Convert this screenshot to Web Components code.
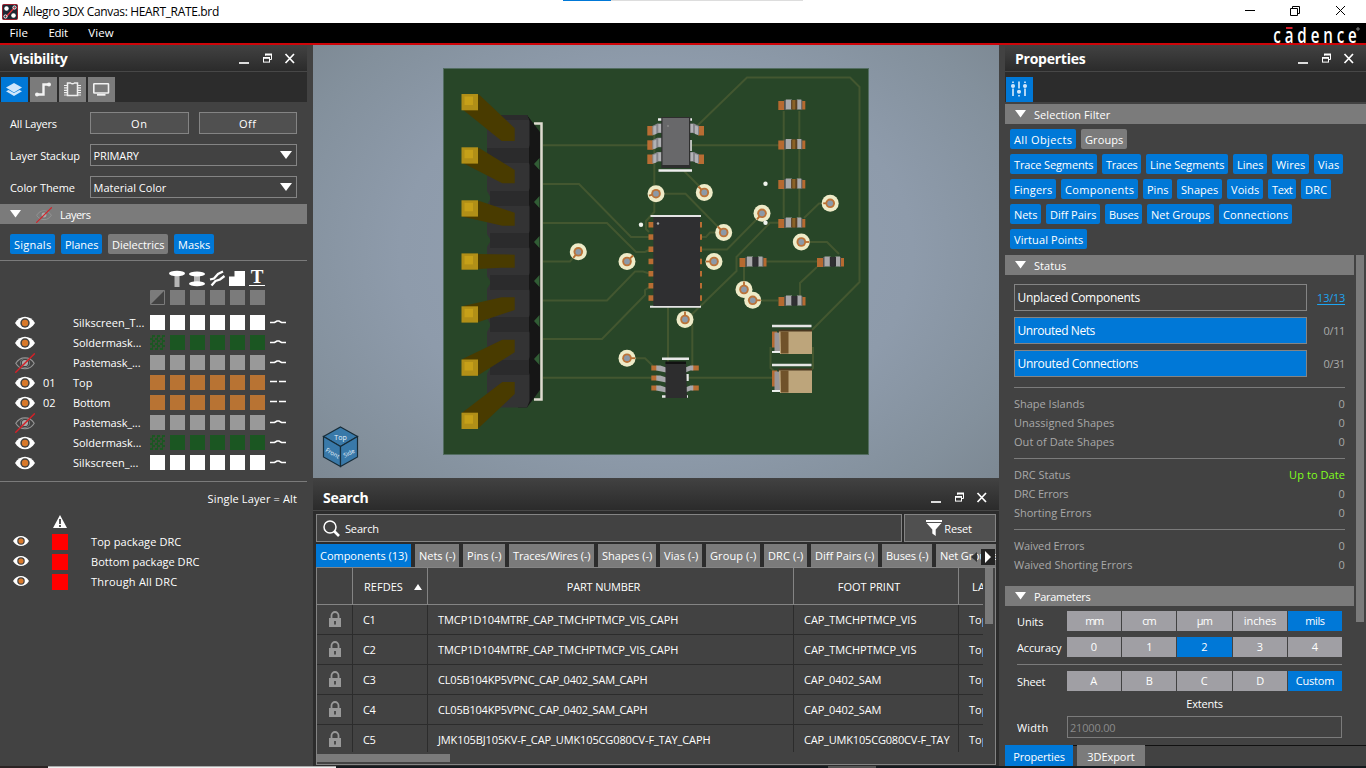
<!DOCTYPE html>
<html lang="en">
<head>
<meta charset="utf-8">
<title>Allegro 3DX Canvas: HEART_RATE.brd</title>
<style>
html,body{margin:0;padding:0;width:1366px;height:768px;overflow:hidden;background:#424242}
body{font-family:"Open Sans","Noto Sans",sans-serif;font-size:11px;line-height:16px;color:#fff}
</style>
</head>
<body>
<allegro-app></allegro-app>
<script>
const base = `*{box-sizing:border-box}:host{display:block;box-sizing:border-box}svg{display:block}`;
const define = (name, css, render) => customElements.define(name, class extends HTMLElement {
  connectedCallback() {
    if (this.shadowRoot) return;
    const root = this.attachShadow({ mode: 'open' });
    root.innerHTML = `<style>${base}${css}</style>${render(this)}`;
  }
});
const at = (el, name, dflt = '') => el.getAttribute(name) ?? dflt;

/* Text run whose tracking is tuned to a given width */
const runs = [];
define('ui-text', `:host{display:inline-block;white-space:nowrap;flex:none;justify-self:start}`, el => { runs.push(el); return '<slot></slot>'; });
function fitRuns() {
  for (const el of runs) {
    const w = parseFloat(at(el, 'w', '0'));
    if (!w) continue;
    const nat = el.getBoundingClientRect().width;
    const slot = el.querySelector('slot');
    const text = slot ? slot.assignedNodes({ flatten: true }).map(n => n.textContent).join('') : el.textContent;
    el.style.letterSpacing = ((w + .4 - nat) / text.length).toFixed(3) + 'px';
  }
}

/* ---------- small pieces ---------- */
define('eye-icon', `:host{flex:none}`, el => {
  const w = at(el, 'w', 20), off = el.hasAttribute('off');
  return off
    ? `<svg width="${w}" height="${w}" viewBox="0 0 20 20"><path d="M.8 10.3C5 3 15 3 19.2 10.3 15 17.6 5 17.6.8 10.3Z" fill="none" stroke="#959595" stroke-width="1.1"/><circle cx="10" cy="10" r="4.6" fill="none" stroke="#777"/><circle cx="10" cy="10" r="3.1" fill="#a9a9a9"/><path d="M.3 19.7 19.8.4" stroke="#d61f26" stroke-width="1.4"/></svg>`
    : `<svg width="${w}" height="${w}" viewBox="0 0 20 20"><path d="M0 10C5 1.6 15 1.6 20 10 15 18.4 5 18.4 0 10Z" fill="#fff"/><circle cx="10" cy="10" r="4.7" fill="#424242"/><circle cx="10" cy="10" r="3.2" fill="#d8792b"/></svg>`;
});
define('filter-chip', `:host{height:20px;border-radius:2px;background:#0078d7;padding-left:4px;line-height:21px;flex:none}:host([off]){background:#7b7b7b}`,
  el => { el.style.width = at(el,'w') + 'px'; return `<ui-text w="${at(el,'w') - 8}"><slot></slot></ui-text>`; });
define('rule-line', `:host{height:1px;background:#7b7b7b;flex:none}`, () => '');
define('section-bar', `:host{height:20px;flex:none;background:#7b7b7b;display:flex;align-items:center;padding:1px 0 0 10px}svg{margin-top:-1px}`,
  () => `<svg width="11" height="8"><path d="M0 0H11L5.5 7.5Z" fill="#fff"/></svg><slot></slot>`);
define('window-buttons', `:host{display:flex;align-items:flex-start;gap:0;width:58px;height:14px;flex:none}`,
  () => `<svg width="58" height="14" viewBox="0 0 58 14" fill="none" stroke="#fff"><path d="M1 11H11" stroke-width="2" stroke="#ddd"/><path d="M27.5 3.5V2.5H33.5V7.5H31.5" /><path d="M27 2.5H34" stroke-width="2"/><rect x="25.5" y="5.5" width="6" height="4.6"/><path d="M25 6H32" stroke-width="1.6"/><path d="M47.5 2 56 11M56 2 47.5 11" stroke-width="1.7"/></svg>`);
define('dock-header', `:host{height:27px;flex:none;background:linear-gradient(#424242,#2b2b2b);border-bottom:1px solid #474747;display:flex;justify-content:space-between;padding:0 11.500px 0 10px;font-size:14px;font-weight:700;line-height:28px}window-buttons{margin-top:7px}:host([tall]){height:33px;line-height:40px;}:host([tall]) window-buttons{margin-top:13px}`,
  el => `<ui-text w="${at(el,'w')}">${at(el,'label')}</ui-text><window-buttons></window-buttons>`);
define('tool-strip', `:host{height:30px;flex:none;background:#2c2c2c;display:flex;gap:2px;padding:5px 1px 0}`, () => `<slot></slot>`);
define('tool-tab', `:host{width:27px;height:25px;background:#7b7b7b;flex:none}:host([on]){background:#0078d7}`, el => {
  const g = {
    layers: `<path d="M5 10.6 13 6 21 10.6 13 15.4Z" fill="#cfe6fb"/><path d="M5 14.3 7.6 12.9 13 16 18.400 12.9 21 14.3 13 19Z" fill="#cfe6fb"/>`,
    route: `<path d="M7 17.500H13.500V7.500H19" fill="none" stroke="#f2f2f2" stroke-width="2.400"/><circle cx="7" cy="17.500" r="2" fill="#f2f2f2"/><circle cx="19" cy="7.500" r="2" fill="#f2f2f2"/>`,
    chip: `<path d="M8.500 6H11.500Q13.500 7.500 15.500 6H18.500V18.500H8.500Z" fill="none" stroke="#eee" stroke-width="1.500"/><path d="M5 8.500H8M5 10.900H8M5 13.300H8M5 15.700H8M5 18H8M19 8.500H22M19 10.900H22M19 13.300H22M19 15.700H22M19 18H22" stroke="#eee" stroke-width="1.200"/>`,
    screen: `<rect x="5.800" y="6.800" width="14.700" height="9.200" rx=".5" fill="none" stroke="#f2f2f2" stroke-width="1.600"/><path d="M9 17.800H17.500" stroke="#f2f2f2" stroke-width="1.800"/>`,
    sliders: `<g stroke="#cfe6fb" stroke-width="1.700" fill="#cfe6fb"><path d="M7 4.500V6M7 11.500V19M13 4.500V11.500M13 18V19.500M19 4.500V6M19 11.500V19"/><circle cx="7" cy="9" r="1.200"/><circle cx="13" cy="14.700" r="1.200"/><circle cx="19" cy="9" r="1.200"/></g>`
  }[at(el,'icon')];
  return `<svg width="27" height="25" viewBox="0 0 27 25">${g}</svg>`;
});

/* ---------- top bars ---------- */
define('title-bar', `:host{height:23px;background:#fff;color:#000;font-size:12px;display:flex;align-items:center;padding-left:2px;position:relative}
.logo{margin-right:5px}.sp{flex:1}.mark{position:absolute;left:563px;top:0;width:240px;height:1px;display:flex}.mark i{width:48px;background:#0078d7}.mark b{flex:1;background:#ddd}`,
() => `<svg class="logo" width="16" height="16" viewBox="0 0 16 16"><rect x=".5" y=".5" width="15" height="15" rx="1" fill="#1d2733" stroke="#9b1d2b"/><path d="M4 13 13 3" stroke="#e32b36" stroke-width="1.300"/><circle cx="4.500" cy="4.500" r="2.200" fill="#fff"/><circle cx="11.500" cy="11.500" r="2.300" fill="#fff"/><circle cx="12.500" cy="3.500" r="1.600" fill="none" stroke="#fff"/><circle cx="3.500" cy="12.500" r="1.600" fill="none" stroke="#fff"/></svg>
<ui-text w="195.500">Allegro 3DX Canvas: HEART_RATE.brd</ui-text><span class="sp"></span>
<svg width="121" height="20" viewBox="0 0 121 20" fill="none" stroke="#000"><path d="M0 8.500H10M45.500 6.500H52.500V13.500H45.500ZM47.500 6V4.500H54.500V11.500H53M91 4 100 13M100 4 91 13"/></svg><div class="mark"><i></i><b></b></div>`);
define('menu-bar', `:host{height:22px;background:#000;border-bottom:2px solid #cf0509;display:flex;align-items:center;padding-left:9.500px;font-size:11.500px}
.m1{margin-right:20.500px}.m2{margin-right:20.500px}.sp{flex:1}svg{margin-right:4px;overflow:visible}`,
() => `<ui-text w="18" class="m1">File</ui-text><ui-text w="19" class="m2">Edit</ui-text><ui-text w="25">View</ui-text><span class="sp"></span>
<svg width="90" height="20" viewBox="1272 23 90 20"><text transform="translate(1273.300 42.500) scale(.72 1)" font-family="Open Sans" font-size="21" font-weight="600" fill="#fff" textLength="116" lengthAdjust="spacing">cadence</text><path d="M1286 28H1292.500" stroke="#d81e2c" stroke-width="2"/><circle cx="1358" cy="29" r="1.200" fill="none" stroke="#bbb" stroke-width=".7"/></svg>`);

/* ---------- visibility ---------- */
define('text-row', `:host{display:flex;height:22px;margin:0 10px 10px;line-height:24px}.l{width:80px;flex:none}.r{flex:1;display:flex;gap:10px}`,
  el => `<div class="l"><ui-text w="${at(el,'w')}">${at(el,'label')}</ui-text></div><div class="r"><slot></slot></div>`);
define('push-button', `:host{flex:1;border:1px solid #848484;background:#505050;text-align:center;line-height:22px}`, () => '<slot></slot>');
define('drop-down', `:host{flex:1;border:1px solid #848484;padding:0 4px 0 2.500px;display:flex;justify-content:space-between;line-height:22px}svg{margin-top:6px}`,
  () => `<slot></slot><svg width="12" height="9"><path d="M0 0H12L6 8Z" fill="#fff"/></svg>`);
define('layer-row', `:host{display:grid;grid-template-columns:28px 30px 77px 120px 20px;height:20px;padding-left:15px;align-items:center;line-height:16px}
.sw{display:flex;gap:5px}.sw i{width:15px;height:15px;background:var(--c)}.sw i.hatch{background:repeating-conic-gradient(#1b5622 0 25%,#3c4a38 0 50%) 0 0/5px 5px}svg{margin-top:-1px}eye-icon{margin-top:1px}ui-text{margin-top:1px}.n{height:17px}`,
  el => { const c = at(el,'c'), h = el.hasAttribute('hatch'), d = el.hasAttribute('dash'), num = at(el,'num');
    return `<eye-icon w="20" ${el.hasAttribute('off') ? 'off' : ''}></eye-icon><span class="n">${num ? `<ui-text w="12">${num}</ui-text>` : ''}</span><ui-text w="${at(el,'w')}">${at(el,'name')}</ui-text>
    <div class="sw" style="--c:${c}"><i class="${h ? 'hatch' : ''}"></i><i></i><i></i><i></i><i></i><i></i></div>
    <svg width="17" height="6" viewBox="0 0 17 6" fill="none" stroke="#fff" stroke-width="1.600">${d ? '<path d="M0 2.500H7M9 2.500H16"/>' : '<path d="M0 3.500H4.500L7 2H9L11.500 3.500H16"/>'}</svg>`; });
define('drc-row', `:host{display:flex;height:20px;padding-left:13px;align-items:center}eye-icon{margin:-3px 22.500px 0 0}i{width:16px;height:16px;background:#f00;margin-right:23.500px}`,
  el => `<eye-icon w="16"></eye-icon><i></i><ui-text w="${at(el,'w')}"><slot></slot></ui-text>`);
define('visibility-panel', `:host{width:307px;display:flex;flex-direction:column}.form{padding-top:10px;height:102px}.chips{display:flex;gap:6px;padding:10px 10px 6px}
.heads{display:flex;padding:9px 0 0 150px;height:45px}.heads svg{overflow:visible}.rows{height:175px;padding-top:6px;}.alt{text-align:right;padding:9px 10px 0 0;height:33px}.warn{padding-left:53px;height:17px;}.sec-eye{margin:0 8px 0 15px}`,
() => `<dock-header label="Visibility" w="57"></dock-header>
<tool-strip><tool-tab on icon="layers"></tool-tab><tool-tab icon="route"></tool-tab><tool-tab icon="chip"></tool-tab><tool-tab icon="screen"></tool-tab></tool-strip>
<div class="form">
<text-row label="All Layers" w="46.500"><push-button><ui-text w="16">On</ui-text></push-button><push-button><ui-text w="17">Off</ui-text></push-button></text-row>
<text-row label="Layer Stackup" w="69.500"><drop-down><ui-text w="45">PRIMARY</ui-text></drop-down></text-row>
<text-row label="Color Theme" w="64.500"><drop-down><ui-text w="72.500">Material Color</ui-text></drop-down></text-row></div>
<section-bar><eye-icon w="16" off class="sec-eye"></eye-icon><ui-text w="30">Layers</ui-text></section-bar>
<div class="chips"><filter-chip w="45">Signals</filter-chip><filter-chip w="41">Planes</filter-chip><filter-chip w="60" off>Dielectrics</filter-chip><filter-chip w="40">Masks</filter-chip></div>
<rule-line></rule-line>
<div class="heads"><svg width="120" height="36" viewBox="0 0 120 36"><g fill="#fff"><path d="M24.500 5H29.500V17H24.500Z" fill="#b5b5b5"/><ellipse cx="27" cy="3.500" rx="8" ry="2.700"/><path d="M44 6H50V14H44Z" fill="#b5b5b5"/><ellipse cx="47" cy="4" rx="8" ry="2.500"/><ellipse cx="47" cy="13.700" rx="8" ry="2.500"/><path d="M79 16V6.500H84.500V1H95V16Z"/></g><path d="M60 9.500 64 8.500 68 4 73 1.500M61.500 15.500 65.500 11 70 9.500 74.500 6" fill="none" stroke="#fff" stroke-width="2.300"/><text x="107" y="13" text-anchor="middle" font-family="Liberation Serif" font-size="19" font-weight="700" fill="#fff">T</text><path d="M99 15.500H115" stroke="#fff"/><g fill="#7b7b7b"><path d="M20 20h15v15h-15zM40 20h15v15h-15zM60 20h15v15h-15zM80 20h15v15h-15zM100 20h15v15h-15z"/><path d="M.5 34.500V20.500H14.500Z"/></g><path d="M.5 20.500h14v14h-14z" fill="none" stroke="#7b7b7b"/></svg></div>
<div class="rows">
<layer-row name="Silkscreen_T..." w="71" c="#fff"></layer-row><layer-row name="Soldermask..." w="68" c="#1b5622" hatch></layer-row><layer-row off name="Pastemask_..." w="67" c="#999"></layer-row><layer-row num="01" name="Top" w="19" c="#b87333" dash></layer-row><layer-row num="02" name="Bottom" w="37" c="#b87333" dash></layer-row><layer-row off name="Pastemask_..." w="67" c="#999"></layer-row><layer-row name="Soldermask..." w="68" c="#1b5622" hatch></layer-row><layer-row name="Silkscreen_..." w="65" c="#fff"></layer-row></div>
<rule-line></rule-line>
<div class="alt"><ui-text w="89">Single Layer = Alt</ui-text></div>
<div class="warn"><svg width="14" height="13"><path d="M7 0 14 13H0Z" fill="#fff"/><path d="M7 4V9M7 10V12" stroke="#424242" stroke-width="1.800"/></svg></div>
<drc-row w="90">Top package DRC</drc-row><drc-row w="108">Bottom package DRC</drc-row><drc-row w="86">Through All DRC</drc-row>`);

/* ---------- 3D canvas ---------- */
const tips = [94, 147.300, 200.300, 253.400, 306.300, 359.500, 412.700];
const shafts = ['478.700,94.300 514.700,128.300 514.700,141 501.700,141 463.300,110','478.700,147.700 514.700,170 514.700,183.300 502.300,183.300 463.300,163.300','478.700,200.700 514.700,212.700 514.700,225.700 502.300,225.700 463.300,216.700','478,254 514.700,254.700 514.700,267.700 501,267.700 478,269','463.300,306 501.700,297.300 514.700,297.300 514.700,310 478.700,322','462,359.300 502.300,339.700 514.700,339.700 514.700,352.300 478.700,375','462,412.700 502.300,382 514.700,382 514.700,394 478.700,428'];
const vias = [[656,193.700,-7,2],[704.300,192.500,-6,-6],[723.700,232.500,-6,-6],[762,213.300,-5,6],[830.200,203.300,-7,0],[801.300,242,8,0],[578.300,251.800,-5,6],[627,261.500,6,-6],[714,261.500,-8,0],[744,289.500,0,-8],[752.700,300.300,8,0],[685,319.500,0,-8],[627,358.200,8,0]];
const smd = (x, y, mid, top = '#5b4021') => `<g transform="translate(${x} ${y})"><path d="M0 1.500h6v9h-6zM23.500 1.500h3.500v8.500h-3.500z" fill="#b66a30"/><path d="M6 .5h2v10h-2zM22.500 .5h1.500v10h-1.500z" fill="#555"/><path d="M7.500 0h6v10h-6zM18.500 0h4.500v10h-4.500z" fill="#a9a9ab"/><path d="M12.800 .5h6.200v9.500h-6.200z" fill="${top}"/><path d="M14 .5h3v9.500h-3z" fill="${mid}"/></g>`;
const leads = (x, y, flip, s = 1) => `<g transform="translate(${x} ${y}) scale(${flip ? -s : s} ${s})"><path d="M0 0h6v9.500h-6z" fill="#b86d33"/><path d="M5 0 10 -2.500H16V7H11L5 9Z" fill="#85858a"/><path d="M6 .5 9 -.5V8L6 9ZM11 -2H14V6.500H11Z" fill="#b2b2b5"/></g>`;
const tant = y => `<g transform="translate(0 ${y})"><path d="M772 1.500H811.500" stroke="#e5e5e5" stroke-width="2.700"/><path d="M772 7H777V23H772Z" fill="#b56a31"/><path d="M774.500 8H780V27H774.500Z" fill="#9a9698"/><path d="M778.500 5H812V8H778.500Z" fill="#493720"/><path d="M779 7H812V29.500H780Z" fill="#bda57b"/><path d="M780.500 7H788.500V29H781Z" fill="#70522a"/><path d="M772 27.500H780" stroke="#fff" stroke-width="1.800"/></g>`;
define('board-view', `:host{height:433px;background:radial-gradient(ellipse 68% 78% at 50% 48%,#95a2b4 0,#8e9bab 55%,#83909c 84%,#747e87 120%)}`,
() => `<svg width="686" height="433" viewBox="313 45 686 433">
<rect x="443.500" y="68.500" width="425" height="386" fill="#284628" stroke="#526c60"/>
<g fill="none" stroke="#435730" stroke-width="2"><path d="M543 145.300H650M543 184H579L631 237H651M543 223H607L636 252H645L651 249M543 261.500H570L578 252M543 300.500H607L635 271.500H643L651 274M543 339H602L645 295V290L651 286M543 377.700H772M654.300 130V212L646 221V229L649 232M684 171 704 191M697 126 747 77.500H850L859.500 87V282L812 330M692 145.300H780M783.700 111V218M799.300 111V218M656 193.700H685.500L723 232M702 237H706L710 232.500H724M702 249.500H727L762 214M780 222.700H770L736.500 257V271L692.300 314V368M668 307V362M804 218 819 203.500H830M801 242H827L839 254M744 267V290M766 261.500H817M817 267 800 283V297M753 300.500H778M627 358.200H645L653 366M770.500 347V368L774 371M813 347V368L810 371"/></g>
<path d="M534 123.500H541.500V399.500H534" fill="none" stroke="#dedbd0" stroke-width="2.500"/>
<path d="M527 115 540 132V390L527 407.500H518V115Z" fill="#161616"/>
<path d="M500 115H527L529.500 121V145L527.500 156 529.500 165V188L527.500 198 529.500 207V231L527.500 240 529.500 249V273L527.500 282 529.500 291V315L527.500 324 529.500 333V357L527.500 366 529.500 375V401L527 407.500H500L487 398V374L490.500 368 487 361V332L491 325 487 318V289L491 282.500 487 276V247L491 240.500 487 234V205L491 198 487 191V121Z" fill="#333334"/>
<path d="M487 148h42v15h-42zM490 191h39v15h-39zM490 233h39v15h-39zM490 275h39v15h-39zM490 317h39v15h-39zM490 360h39v15h-39zM500 115h27l2 5h-42z" fill="#2b2b2c"/>
<g fill="#315d35"><path d="M539.500 158V170L534 164ZM539.500 196V208L534 202ZM539.500 236V248L534 242ZM539.500 275V287L534 281ZM539.500 315V327L534 321ZM539.500 353V365L534 359Z"/></g>
${shafts.map(p => `<polygon points="${p}" fill="#493b00"/>`).join('')}
${tips.map(y => `<rect x="461.500" y="${y}" width="16.500" height="16.300" fill="#b18f17"/><rect x="464.500" y="${y + 2.500}" width="8.500" height="8.500" fill="#c6a018"/>`).join('')}
${vias.map(([x, y, dx, dy]) => `<circle cx="${x}" cy="${y}" r="8.500" fill="#eeebc8"/><path d="M${x} ${y}l${dx} ${dy}" stroke="#b66c30" stroke-width="1.800"/><circle cx="${x}" cy="${y}" r="4.800" fill="#bb7339"/><circle cx="${x}" cy="${y}" r="2.900" fill="#8c99a8"/>`).join('')}
<g fill="#f1f4ee"><circle cx="641" cy="224.700" r="2.200"/><circle cx="765.500" cy="183.700" r="2.200"/><circle cx="765.500" cy="222.700" r="2.200"/></g>
${leads(647.300,126,0)}${leads(647.300,140.300,0)}${leads(647.300,154.500,0)}${leads(704,126,1)}${leads(704,154.500,1)}
<path d="M658 119.500H692M658.500 170.500H692M690.500 140V151" stroke="#eee" stroke-width="2.500"/>
<rect x="661.300" y="117" width="29" height="51" fill="#2e2e2e"/><rect x="662.500" y="118" width="26.500" height="47" fill="#68686a"/><circle cx="668" cy="126" r="1" fill="#888"/>
<g fill="#b86d33">${[222,234.300,246.500,258.700,271,283,295.300].map(y => `<rect x="648.500" y="${y}" width="6" height="5.500"/><rect x="697" y="${y}" width="5" height="5.500"/>`).join('')}</g>
<path d="M650.500 216H701M650 306.700H701" stroke="#e5e5e5" stroke-width="2"/><rect x="653.300" y="217" width="46.700" height="89" fill="#2f2f31"/><circle cx="658" cy="223.500" r="1.200" fill="#aaa"/>
<g transform="translate(651.300 0)">${[365.500,375.500,385.500].map(y => `<path d="M0 ${y}h6v5h-6z" fill="#b86d33"/><path d="M5 ${y}H9L15 ${y + 2}V${y + 7}L10 ${y + 6} 5 ${y + 5}Z" fill="#a7a7ab"/>`).join('')}${[365.500,385.500].map(y => `<path d="M41 ${y}h6.500v5h-6.500z" fill="#b86d33"/><path d="M42 ${y}H39L34 ${y + 2}V${y + 7}L39 ${y + 5} 42 ${y + 5}Z" fill="#a7a7ab"/>`).join('')}</g>
<path d="M662 358.700H689M662 396.500H688M687.500 374V381" stroke="#e8e8e8" stroke-width="2.500"/><path d="M665.500 362H686L687 398H665.500Z" fill="#2d2d2e"/><path d="M665.500 361.500H686V364H665.500Z" fill="#111"/>
${smd(778.300,99.500,'#8a6226')}${smd(778.300,139,'#8a6226')}${smd(778.300,178.500,'#8a6226')}${smd(778.300,217.500,'#8a6226')}${smd(739.500,256.500,'#303033','#2d2d30')}${smd(817,256.500,'#303033','#2d2d30')}${smd(778.500,295.500,'#303033','#2d2d30')}
${tant(324.500)}${tant(363.500)}
<g stroke="#172c38" stroke-width="1.200" fill="#3979a9"><path d="M340.500 427 357.500 436.500 340.500 446.500 323.500 436.500Z"/><path d="M323.500 436.500 340.500 446.500V466.500L323.500 457Z"/><path d="M357.500 436.500 340.500 446.500V466.500L357.500 457Z"/></g>
<g font-family="Open Sans" font-size="7" fill="#e7f3fb" text-anchor="middle"><text x="340.500" y="439.500">Top</text><text transform="translate(331.500 455) rotate(30)" font-size="6">Front</text><text transform="translate(350 455) rotate(-28)" font-size="6">Side</text></g>
</svg>`);

/* ---------- search ---------- */
define('result-tab', `:host{height:23px;background:#7b7b7b;padding-left:4px;line-height:24px;flex:none;width:var(--w)}:host([on]){background:#0078d7}`,
  el => `<ui-text w="${at(el,'w')}"><slot></slot></ui-text>`);
define('result-row', `:host{display:grid;grid-template-columns:36px 75px 366px 165px 25px;height:30px}
div{border-right:1px solid #2c2c2c;border-bottom:1px solid #2c2c2c;padding-left:10px;line-height:29px;overflow:hidden;white-space:nowrap}div:last-child{border-right:0}.k{padding:6px 0 0 12px}`,
  el => `<div class="k"><svg width="12" height="16"><path d="M2.500 7V4.500a3.500 3.500 0 0 1 7 0V7" fill="none" stroke="#999" stroke-width="1.800"/><path d="M0 7H12V16H0Z" fill="#999"/><path d="M6 10V13.500" stroke="#444" stroke-width="1.800"/></svg></div><div><ui-text w="12">${at(el,'ref')}</ui-text></div><div><ui-text w="${at(el,'pw')}">${at(el,'part')}</ui-text></div><div><ui-text w="${at(el,'fw')}">${at(el,'foot')}</ui-text></div><div><ui-text w="19">Top</ui-text></div>`);
define('search-panel', `:host{height:288px;background:#2c2c2c;display:flex;flex-direction:column}
.q{display:flex;gap:2px;padding:3px 3px 0;height:31px}.box{width:586px;border:1px solid #848484;background:#424242;display:flex;align-items:center;padding-left:6px;gap:5px}.box ui-text,.reset ui-text{margin-top:1px}.reset{flex:1;border:1px solid #848484;background:#505050;display:flex;align-items:center;justify-content:center;gap:2px;padding-right:2px}
.tabs{position:relative;display:flex;gap:4px;margin:2px 3px 0;height:23px;overflow:hidden}.nav{position:absolute;right:1px;top:5px;display:flex}
.tbl{margin:0 3px;height:198px;border:1px solid #848484;background:#424242;display:grid;grid-template-columns:666px 13px;overflow:hidden}.grid{height:184px;overflow:hidden}
.head{display:grid;grid-template-columns:36px 75px 366px 165px 25px;height:37px}.head div{border-right:1px solid #848484;border-bottom:1px solid #848484;line-height:38px;text-align:center;overflow:hidden;white-space:nowrap;padding-right:14px}.head div:last-child{border-right:0;text-align:left;padding:0 0 0 13px}.head .ref{display:flex;align-items:center;padding:1px 0 0 11px;gap:11px;}
.vs{width:8px;height:56px;background:#7b7b7b;margin-left:2px}.hs{width:133px;height:8px;background:#7b7b7b;margin-top:2px}`,
() => { const tab = (t, W, w, on) => `<result-tab ${on ? 'on' : ''} w="${w}" style="--w:${W}px">${t}</result-tab>`;
return `<dock-header tall label="Search" w="45"></dock-header>
<div class="q"><div class="box"><svg width="17" height="17"><circle cx="7" cy="7" r="6" fill="none" stroke="#fff" stroke-width="1.500"/><path d="M11 11 16 16" stroke="#fff" stroke-width="2.600"/></svg><ui-text w="33.500">Search</ui-text></div><div class="reset"><svg width="16" height="16"><path d="M0 0H16V2H0ZM.5 3H15.500L9.700 9.500V16L6.300 13.500V9.500Z" fill="#fff"/></svg><ui-text w="27">Reset</ui-text></div></div>
<div class="tabs">${tab('Components (13)',95,87,1)}${tab('Nets (-)',44,36)}${tab('Pins (-)',42,34)}${tab('Traces/Wires (-)',85,77)}${tab('Shapes (-)',58,50)}${tab('Vias (-)',42,34)}${tab('Group (-)',54,46)}${tab('DRC (-)',43,35)}${tab('Diff Pairs (-)',67,59)}${tab('Buses (-)',50,42)}${tab('Net Groups (-)',80,70)}<div class="nav"><svg width="26" height="16"><path d="M8 3V13L2 8Z" fill="#333"/><path d="M12 0H26V16H12Z" fill="#242424"/><path d="M16 2V14L22 8Z" fill="#fff"/></svg></div></div>
<div class="tbl"><div><div class="grid"><div class="head"><div></div><div class="ref"><ui-text w="38.500">REFDES</ui-text><svg width="8" height="6"><path d="M4 0 8 6H0Z" fill="#fff"/></svg></div><div><ui-text w="73">PART NUMBER</ui-text></div><div><ui-text w="62">FOOT PRINT</ui-text></div><div><ui-text w="33">LAYER</ui-text></div></div>
<result-row ref="C1" part="TMCP1D104MTRF_CAP_TMCHPTMCP_VIS_CAPH" pw="240" foot="CAP_TMCHPTMCP_VIS" fw="112"></result-row><result-row ref="C2" part="TMCP1D104MTRF_CAP_TMCHPTMCP_VIS_CAPH" pw="240" foot="CAP_TMCHPTMCP_VIS" fw="112"></result-row><result-row ref="C3" part="CL05B104KP5VPNC_CAP_0402_SAM_CAPH" pw="209" foot="CAP_0402_SAM" fw="77"></result-row><result-row ref="C4" part="CL05B104KP5VPNC_CAP_0402_SAM_CAPH" pw="209" foot="CAP_0402_SAM" fw="77"></result-row><result-row ref="C5" part="JMK105BJ105KV-F_CAP_UMK105CG080CV-F_TAY_CAPH" pw="272" foot="CAP_UMK105CG080CV-F_TAY" fw="145"></result-row></div><div class="hs"></div></div><div class="vs"></div></div>`; });

/* ---------- properties ---------- */
define('status-box', `:host{display:flex;height:27px;margin-bottom:6px;align-items:stretch;justify-content:space-between;font-size:12px}.b{width:293px;border:1px solid #848484;padding-left:2.500px;line-height:26px}:host([on]) .b{background:#0078d7}.v{font-size:11px;line-height:28px;color:#aaa}.v.link{color:#1da5f2}.v.link ui-text{text-decoration:underline;text-underline-offset:2px}`,
  el => `<div class="b"><ui-text w="${at(el,'w')}"><slot></slot></ui-text></div><div class="v ${el.hasAttribute('on') ? '' : 'link'}"><ui-text w="${at(el,'vw')}">${at(el,'v')}</ui-text></div>`);
define('status-row', `:host{display:flex;justify-content:space-between;height:19px;line-height:17px;color:#a8a8a8}b{font-weight:400;color:var(--v,inherit)}`,
  el => `<ui-text w="${at(el,'w')}"><slot></slot></ui-text><b><ui-text w="${at(el,'vw','6')}">${at(el,'v','0')}</ui-text></b>`);
define('segment-row', `:host{display:flex;height:19px}.l{width:50px;line-height:22px;flex:none}.g{display:grid;grid-template-columns:54px 54px 55px 54px 54px;gap:1px}.g div{background:#a09fa4;text-align:center;line-height:20px}.g div.on{background:#0078d7}`,
  el => `<div class="l"><ui-text w="${at(el,'w')}">${at(el,'label')}</ui-text></div><div class="g">${at(el,'items').split('|').map(s => { const [t, w] = s.split(':'); return `<div class="${t === at(el,'on') ? 'on' : ''}"><ui-text w="${w}">${t}</ui-text></div>`; }).join('')}</div>`);
define('properties-panel', `:host{width:361px;display:flex;flex-direction:column;height:723px}
.bar1{margin-top:2px}.t{margin-left:8px}.chips{padding:5px 5px 0;height:131px;flex:none;display:flex;flex-direction:column;gap:5px}.chips div{display:flex;gap:5px}
.body{display:flex;height:490px;overflow:hidden}.main{width:349px;display:flex;flex-direction:column}.sb{width:8px;height:367px;background:#7b7b7b;margin-left:2px}
.st{padding:9px 9px 0;height:311px;flex:none}.st rule-line{margin:6px 0 7px}.st .boxes+rule-line{margin-top:4px}.boxes{display:flow-root}
.pr{padding:5px 12px 0}.pr rule-line{margin:8px 0 6px}.ext{text-align:center;height:26px;line-height:28px;margin-left:50px}.w{display:flex;line-height:24px}.w span{width:50px}.f{width:275px;height:22px;border:1px solid #7b7b7b;color:#8a8a8a;padding-left:2px;line-height:22px}.f2{margin:6px 0 0 50px}
.foot{height:23px;flex:none;display:flex;gap:4px;position:relative}.foot div{width:68px;text-align:center;background:#0078d7;line-height:24px}.foot div+div{background:#7b7b7b}.foot::before{content:"";position:absolute;left:68px;right:0;top:0;height:1px;background:#111}.foot div{position:relative}.acc{margin-top:7px}`,
() => { const row = s => `<div>${s.split('|').map(x => { const [t, w, off] = x.split(':'); return `<filter-chip w="${w}" ${off ? 'off' : ''}>${t}</filter-chip>`; }).join('')}</div>`;
return `<dock-header label="Properties" w="70"></dock-header><tool-strip><tool-tab on icon="sliders"></tool-tab></tool-strip>
<section-bar class="bar1"><ui-text class="t" w="76">Selection Filter</ui-text></section-bar>
<div class="chips">${row('All Objects:66|Groups:46:1')}${row('Trace Segments:87|Traces:39|Line Segments:82|Lines:34|Wires:37|Vias:29')}${row('Fingers:46|Components:77|Pins:29|Shapes:45|Voids:36|Text:28|DRC:30')}${row('Nets:31|Diff Pairs:54|Buses:37|Net Groups:67|Connections:73')}${row('Virtual Points:77')}</div>
<div class="body"><div class="main"><section-bar><ui-text class="t" w="32">Status</ui-text></section-bar>
<div class="st"><div class="boxes"><status-box w="122" v="13/13" vw="27.500">Unplaced Components</status-box><status-box on w="77" v="0/11" vw="21">Unrouted Nets</status-box><status-box on w="120" v="0/31" vw="21">Unrouted Connections</status-box></div>
<rule-line></rule-line><status-row w="70">Shape Islands</status-row><status-row w="100">Unassigned Shapes</status-row><status-row w="100">Out of Date Shapes</status-row><rule-line></rule-line>
<status-row w="56" v="Up to Date" vw="55.500" style="--v:#80ff1c">DRC Status</status-row><status-row w="54">DRC Errors</status-row><status-row w="77">Shorting Errors</status-row><rule-line></rule-line><status-row w="70">Waived Errors</status-row><status-row w="118">Waived Shorting Errors</status-row></div>
<section-bar><ui-text class="t" w="56">Parameters</ui-text></section-bar>
<div class="pr"><segment-row label="Units" w="26" on="mils" items="mm:17|cm:13|µm:15|inches:32|mils:19"></segment-row><segment-row class="acc" label="Accuracy" w="44" on="2" items="0:6|1:5|2:6|3:6|4:6"></segment-row><rule-line></rule-line><segment-row label="Sheet" w="28" on="Custom" items="A:7|B:6|C:7|D:7|Custom:38"></segment-row>
<div class="ext"><ui-text w="36">Extents</ui-text></div><div class="w"><span><ui-text w="31">Width</ui-text></span><div class="f"><ui-text w="45">21000.00</ui-text></div></div><div class="f f2"></div></div>
</div><div class="sb"></div></div>
<div class="foot"><div><ui-text w="51">Properties</ui-text></div><div><ui-text w="47">3DExport</ui-text></div></div>`; });

define('allegro-app', `:host{width:1366px;height:768px;overflow:hidden;position:relative;background:#424242}
main{display:grid;grid-template-columns:307px 686px 361px;column-gap:6px;height:723px}.c{display:flex;flex-direction:column}
.edge{position:absolute;left:0;right:0;bottom:0;height:2px;display:flex;background:#151a1e}.edge i{height:2px}`,
() => `<title-bar></title-bar><menu-bar></menu-bar><main><visibility-panel></visibility-panel><div class="c"><board-view></board-view><search-panel></search-panel></div><properties-panel></properties-panel></main>
<div class="edge"><i style="width:48px;background:#2c2424"></i><i style="width:288px;background:#eee;border-top:1px solid #aaa"></i><i style="width:492px"></i><i style="width:48px;background:#555"></i></div>`);
fitRuns();
</script>
</body>
</html>
